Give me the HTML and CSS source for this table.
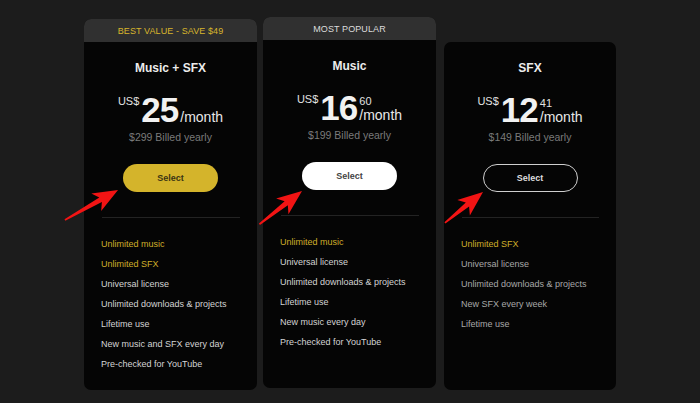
FILE: index.html
```
<!DOCTYPE html>
<html lang="en">

<head>
    <meta charset="utf-8">
    <meta name="viewport" content="width=device-width, initial-scale=1.0">
    <title>Pricing</title>
    <link rel="stylesheet" href="styles.css">
</head>

<body>

    <div class="plans">
        <div class="plan plan-sfxmusic">
            <div class="banner gold">BEST VALUE - SAVE $49</div>
            <div class="body">
                <h2 class="navn">Music + SFX</h2>
                <div class="pris">
                    <span class="valuta">US$</span>
                    <span class="belob">25</span>
                    <span class="side">
                        <span class="cents"></span>
                        <span class="md">/month</span>
                    </span>
                </div>
                <p class="aar">$299 Billed yearly</p>
                <button class="knap knap-gold">Select</button>
                <hr>
                <ul>
                    <li class="gul">Unlimited music</li>
                    <li class="gul">Unlimited SFX</li>
                    <li>Universal license</li>
                    <li>Unlimited downloads &amp; projects</li>
                    <li>Lifetime use</li>
                    <li>New music and SFX every day</li>
                    <li>Pre-checked for YouTube</li>
                </ul>
            </div>
        </div>

        <div class="plan plan-music">
            <div class="banner">MOST POPULAR</div>
            <div class="body">
                <h2 class="navn">Music</h2>
                <div class="pris">
                    <span class="valuta">US$</span>
                    <span class="belob">16</span>
                    <span class="side">
                        <span class="cents">60</span>
                        <span class="md">/month</span>
                    </span>
                </div>
                <p class="aar">$199 Billed yearly</p>
                <button class="knap knap-hvid">Select</button>
                <hr>
                <ul>
                    <li class="gul">Unlimited music</li>
                    <li>Universal license</li>
                    <li>Unlimited downloads &amp; projects</li>
                    <li>Lifetime use</li>
                    <li>New music every day</li>
                    <li>Pre-checked for YouTube</li>
                </ul>
            </div>
        </div>

        <div class="plan plan-sfx">
            <div class="body">
                <h2 class="navn">SFX</h2>
                <div class="pris">
                    <span class="valuta">US$</span>
                    <span class="belob">12</span>
                    <span class="side">
                        <span class="cents">41</span>
                        <span class="md">/month</span>
                    </span>
                </div>
                <p class="aar">$149 Billed yearly</p>
                <button class="knap knap-kant">Select</button>
                <hr>
                <ul class="graa">
                    <li class="gul">Unlimited SFX</li>
                    <li>Universal license</li>
                    <li>Unlimited downloads &amp; projects</li>
                    <li>New SFX every week</li>
                    <li>Lifetime use</li>
                </ul>
            </div>
        </div>
    </div>

    <!-- red arrows drawn on top of the screenshot -->
    <svg class="pile" width="700" height="403" viewBox="0 0 700 403">
        <g fill="#f21414">
            <polygon transform="translate(118 190) rotate(-29.5)" points="0,0 -25,-10 -20,-2.6 -61,-0.8 -61,0.8 -20,2.6 -25,10" />
            <polygon transform="translate(302 191) rotate(-38)" points="0,0 -25,-10 -20,-2.6 -54,-0.8 -54,0.8 -20,2.6 -25,10" />
            <polygon transform="translate(483 192) rotate(-39)" points="0,0 -25,-10 -20,-2.6 -49,-0.8 -49,0.8 -20,2.6 -25,10" />
        </g>
    </svg>

</body></html>
```

FILE: styles.css
```
body {
    background: #1c1c1c;
    font-family: "Liberation Sans", Arial, sans-serif;
    margin: 0;
    padding: 0;
    width: 700px;
    height: 403px;
    overflow: hidden;
    position: relative;
}

.plans {
    display: flex;
    align-items: flex-start;
    gap: 6px;
    padding-left: 84px;
}

.plan {
    width: 173px;
    background-color: #050505;
    border-radius: 7px;
    overflow: hidden;
    display: flex;
    flex-direction: column;
}

.plan-sfxmusic {
    margin-top: 19px;
    height: 371px;
}

.plan-music {
    margin-top: 17px;
    height: 371px;
}

.plan-sfx {
    margin-top: 42px;
    width: 172px;
    height: 348px;
    margin-left: 2px;
}

.banner {
    height: 23px;
    line-height: 24px;
    background-color: #303030;
    color: #dcdcdc;
    font-size: 9px;
    text-align: center;
    letter-spacing: 0.1px;
}

.banner.gold {
    color: #d8b52c;
}

.body {
    display: flex;
    flex-direction: column;
    align-items: center;
    padding-top: 19px;
}

.navn {
    margin: 0;
    font-size: 12px;
    line-height: 14px;
    font-weight: 700;
    color: #ececec;
}

.pris {
    display: flex;
    margin-top: 15px;
    height: 40px;
    color: #f2f2f2;
}

.valuta {
    font-size: 11px;
    line-height: 12px;
    margin-top: 5px;
    margin-right: 2px;
    color: #e2e2e2;
}

.belob {
    font-size: 35px;
    font-weight: 700;
    line-height: 40px;
    letter-spacing: -1px;
}

.side {
    display: flex;
    flex-direction: column;
    justify-content: flex-end;
    margin-left: 2px;
    padding-bottom: 6px;
}

.cents {
    font-size: 11px;
    line-height: 13px;
    color: #e2e2e2;
}

.md {
    font-size: 14px;
    line-height: 14px;
    color: #e8e8e8;
}

.aar {
    margin: 1px 0 0;
    font-size: 10.5px;
    line-height: 12px;
    color: #7a7a7a;
}

.knap {
    margin-top: 21px;
    width: 95px;
    height: 28px;
    border-radius: 14px;
    border: 0;
    font-family: "Liberation Sans", Arial, sans-serif;
    font-size: 9px;
    font-weight: 700;
    cursor: pointer;
}

.knap-gold {
    background-color: #d4b42b;
    color: #3b3413;
}

.knap-hvid {
    background-color: #ffffff;
    color: #444444;
}

.knap-kant {
    background-color: transparent;
    border: 1px solid #cfcfcf;
    color: #dedede;
}

hr {
    align-self: stretch;
    margin: 25px 17px 0 18px;
    border: 0;
    border-top: 1px solid #232323;
}

ul {
    align-self: stretch;
    list-style: none;
    margin: 16px 0 0;
    padding: 0 0 0 17px;
}

li {
    font-size: 9px;
    line-height: 20px;
    color: #d4d4d4;
}

.graa li {
    color: #a8a8a8;
}

li.gul,
.graa li.gul {
    color: #cfae2a;
}

.pile {
    position: absolute;
    top: 0;
    left: 0;
    pointer-events: none;
}
```
